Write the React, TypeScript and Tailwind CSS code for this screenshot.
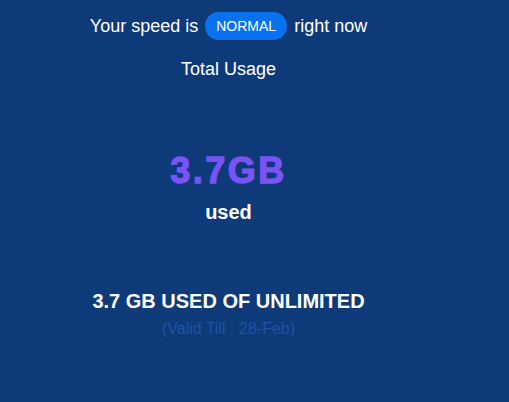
export default function App() {
  return (
    <div
      className="w-[509px] h-[402px] bg-[#0f3a79] overflow-hidden"
      style={{ fontFamily: '"Liberation Sans", Arial, sans-serif' }}
    >
      <div className="w-[457px] flex flex-col items-center text-white">
        {/* Speed status */}
        <div className="mt-[12px] flex items-center gap-[7px] text-[18px] leading-[20px]">
          <span>Your speed is</span>
          <span className="h-[28px] px-[11px] flex items-center rounded-full bg-[#0a72f0] text-[14px]">
            NORMAL
          </span>
          <span>right now</span>
        </div>

        <p className="mt-[19px] text-[18px] leading-[20px]">Total Usage</p>

        {/* Usage */}
        <p className="mt-[72px] text-[36px] leading-[40px] font-black tracking-[2.5px] text-[#7a53f6] [-webkit-text-stroke:1.3px_#7a53f6]">
          3.7GB
        </p>
        <p className="mt-[9px] text-[20px] leading-[24px] font-bold">used</p>

        <p className="mt-[65px] text-[20px] leading-[24px] font-bold">
          3.7 GB USED OF UNLIMITED
        </p>
        <p className="mt-[6px] text-[16px] leading-[20px] text-[#1f52a6]">
          (Valid Till : 28-Feb)
        </p>
      </div>
    </div>
  );
}
